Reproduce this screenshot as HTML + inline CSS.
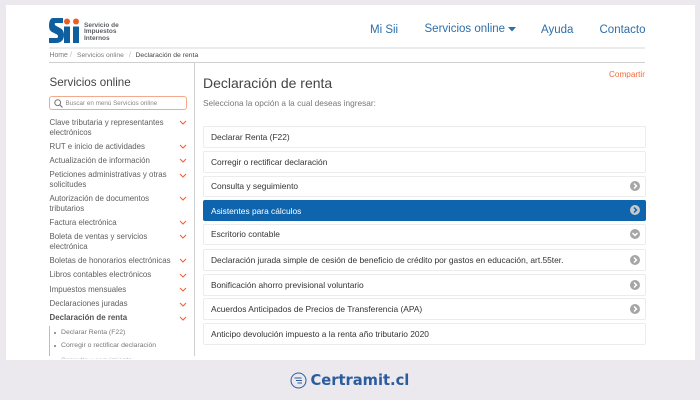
<!DOCTYPE html>
<html lang="es"><head><meta charset="utf-8"><title>Declaración de renta</title>
<style>
html,body{margin:0;padding:0}
body{width:700px;height:400px;background:#ebe8ee;position:relative;overflow:hidden;font-family:"Liberation Sans",sans-serif}
.a{position:absolute;white-space:nowrap}
#p{position:absolute;left:6px;top:5px;width:689px;height:355px;background:#fff}
.n{font-size:11.5px;color:#2d6fa8;top:23px;line-height:14px}
.m{left:49.5px;font-size:7.9px;line-height:9.5px;color:#5f5f5f;white-space:nowrap}
.ch{position:absolute;left:179px;width:8px;height:5px}
.r{position:absolute;left:203px;width:441px;background:#fff;border:1px solid #ececec;border-radius:2px;font-size:8.4px;color:#333;box-sizing:content-box}
.r span{position:absolute;left:7px;top:50%;transform:translateY(-50%);white-space:nowrap}
.r svg{position:absolute;right:5px;top:50%;margin-top:-5.5px}
.s{left:61px;font-size:6.85px;color:#777;line-height:10px}
</style></head><body>
<div id="p"></div>
<svg class="a" style="left:49px;top:17px" width="32" height="27" viewBox="0 0 32 27">
<path fill="#0f5f9f" d="M4 1H14V6H6.500C5.500 6 5.500 8 6.500 8.500L11 11C14 12.500 15 15 15 18C15 23 12 26 7 26H0V21H7.500C9.500 21 9.500 18.500 8 17.500L3 15C1 14 0 11.500 0 9C0 4 1.500 1 4 1Z"/>
<rect x="15" y="9.500" width="6" height="16.500" fill="#0f5f9f"/>
<rect x="24" y="9.500" width="6" height="16.500" fill="#0f5f9f"/>
<circle cx="18" cy="4.500" r="3" fill="#ef5b25"/><circle cx="27" cy="4.500" r="3" fill="#ef5b25"/>
</svg>
<div class="a" style="left:84px;top:23px;font-size:6.500px;line-height:6.300px;font-weight:bold;color:#5c5f63">Servicio de<br>Impuestos<br>Internos</div>
<div class="a n" style="left:370px">Mi Sii</div>
<div class="a n" style="left:424.500px;top:22px">Servicios online</div>
<svg class="a" style="left:508px;top:26.500px" width="8" height="5"><path d="M0 0H8L4 4.500Z" fill="#2d6fa8"/></svg>
<div class="a n" style="left:541px">Ayuda</div>
<div class="a n" style="left:599.500px">Contacto</div>
<div class="a" style="left:49px;top:47px;width:596px;height:2px;background:#ececec"></div>
<div class="a" style="left:49px;top:61.500px;width:596px;height:1px;background:#cfcfcf"></div>
<div class="a" style="left:49.500px;top:51px;font-size:6.900px;line-height:10px;color:#7b7b7b">Home</div>
<div class="a" style="left:70px;top:51px;font-size:6.900px;line-height:10px;color:#b5b5b5">/</div>
<div class="a" style="left:77px;top:51px;font-size:6.700px;line-height:10px;color:#7b7b7b">Servicios online</div>
<div class="a" style="left:129px;top:51px;font-size:6.900px;line-height:10px;color:#b5b5b5">/</div>
<div class="a" style="left:135.500px;top:51px;font-size:6.800px;line-height:10px;color:#444">Declaración de renta</div>
<div class="a" style="left:194px;top:62px;width:1px;height:294px;background:#cfcfcf"></div>
<div class="a" style="left:49.500px;top:74.500px;font-size:11.600px;line-height:15px;color:#444">Servicios online</div>
<div class="a" style="left:49px;top:96px;width:136px;height:12px;border:1px solid #f3a98c;border-radius:3px"></div>
<svg class="a" style="left:54px;top:98.500px" width="9" height="9" viewBox="0 0 9 9"><circle cx="3.700" cy="3.700" r="2.900" fill="none" stroke="#777" stroke-width="1"/><path d="M5.800 5.800L8.500 8.500" stroke="#777" stroke-width="1.100"/></svg>
<div class="a" style="left:65.500px;top:98.500px;font-size:6.300px;line-height:10px;color:#888">Buscar en menú Servicios online</div>

<div class="a m" style="top:118px">Clave tributaria y representantes<br>electrónicos</div>
<div class="a m" style="top:141.500px">RUT e inicio de actividades</div>
<div class="a m" style="top:155.500px">Actualización de información</div>
<div class="a m" style="top:170px">Peticiones administrativas y otras<br>solicitudes</div>
<div class="a m" style="top:194px">Autorización de documentos<br>tributarios</div>
<div class="a m" style="top:218px">Factura electrónica</div>
<div class="a m" style="top:232px">Boleta de ventas y servicios<br>electrónica</div>
<div class="a m" style="top:256px">Boletas de honorarios electrónicas</div>
<div class="a m" style="top:270px">Libros contables electrónicos</div>
<div class="a m" style="top:284.500px">Impuestos mensuales</div>
<div class="a m" style="top:299px">Declaraciones juradas</div>
<div class="a m" style="top:313px;font-weight:bold;color:#555">Declaración de renta</div>

<svg class="ch" style="top:120px" viewBox="0 0 8 5"><path d="M1 1L4 4L7 1" fill="none" stroke="#f0603a" stroke-width="1.100"/></svg>
<svg class="ch" style="top:144px" viewBox="0 0 8 5"><path d="M1 1L4 4L7 1" fill="none" stroke="#f0603a" stroke-width="1.100"/></svg>
<svg class="ch" style="top:158px" viewBox="0 0 8 5"><path d="M1 1L4 4L7 1" fill="none" stroke="#f0603a" stroke-width="1.100"/></svg>
<svg class="ch" style="top:173px" viewBox="0 0 8 5"><path d="M1 1L4 4L7 1" fill="none" stroke="#f0603a" stroke-width="1.100"/></svg>
<svg class="ch" style="top:196px" viewBox="0 0 8 5"><path d="M1 1L4 4L7 1" fill="none" stroke="#f0603a" stroke-width="1.100"/></svg>
<svg class="ch" style="top:220px" viewBox="0 0 8 5"><path d="M1 1L4 4L7 1" fill="none" stroke="#f0603a" stroke-width="1.100"/></svg>
<svg class="ch" style="top:234px" viewBox="0 0 8 5"><path d="M1 1L4 4L7 1" fill="none" stroke="#f0603a" stroke-width="1.100"/></svg>
<svg class="ch" style="top:258px" viewBox="0 0 8 5"><path d="M1 1L4 4L7 1" fill="none" stroke="#f0603a" stroke-width="1.100"/></svg>
<svg class="ch" style="top:273px" viewBox="0 0 8 5"><path d="M1 1L4 4L7 1" fill="none" stroke="#f0603a" stroke-width="1.100"/></svg>
<svg class="ch" style="top:287px" viewBox="0 0 8 5"><path d="M1 1L4 4L7 1" fill="none" stroke="#f0603a" stroke-width="1.100"/></svg>
<svg class="ch" style="top:301.500px" viewBox="0 0 8 5"><path d="M1 1L4 4L7 1" fill="none" stroke="#f0603a" stroke-width="1.100"/></svg>
<svg class="ch" style="top:316px" viewBox="0 0 8 5"><path d="M1 1L4 4L7 1" fill="none" stroke="#f0603a" stroke-width="1.100"/></svg>

<div class="a" style="left:49px;top:326px;width:1px;height:30px;background:#f3a98c"></div>
<div class="a" style="left:54px;top:332px;width:2px;height:2px;background:#999"></div>
<div class="a s" style="top:328px">Declarar Renta (F22)</div>
<div class="a" style="left:54px;top:345px;width:2px;height:2px;background:#999"></div>
<div class="a s" style="top:341px">Corregir o rectificar declaración</div>
<div class="a" style="left:61px;top:350px;width:90px;height:9px;overflow:hidden;opacity:.6"><div class="a" style="left:0;top:5.500px;font-size:6.850px;color:#777;line-height:10px">Consulta y seguimiento</div></div>

<div class="a" style="left:203px;top:74.500px;font-size:14px;line-height:16px;color:#444">Declaración de renta</div>
<div class="a" style="left:203px;top:98px;font-size:8.300px;line-height:10px;color:#777">Selecciona la opción a la cual deseas ingresar:</div>
<div class="a" style="left:609px;top:70px;font-size:8.200px;line-height:10px;color:#f26a3d">Compartir</div>

<div class="r" style="top:126px;height:20px"><span>Declarar Renta (F22)</span></div>
<div class="r" style="top:151px;height:20px"><span>Corregir o rectificar declaración</span></div>
<div class="r" style="top:175.500px;height:19.500px"><span>Consulta y seguimiento</span><svg width="10" height="10" viewBox="0 0 10 10"><circle cx="5" cy="5" r="5" fill="#a6a6a6"/><path d="M4 2.500L6.500 5L4 7.500" fill="none" stroke="#fff" stroke-width="1.500"/></svg></div>
<div class="r" style="top:200px;height:19px;background:#0f64ae;border-color:#0f64ae;color:#fff"><span>Asistentes para cálculos</span><svg width="10" height="10" viewBox="0 0 10 10"><circle cx="5" cy="5" r="5" fill="#c9c9c9"/><path d="M4 2.500L6.500 5L4 7.500" fill="none" stroke="#0f64ae" stroke-width="1.500"/></svg></div>
<div class="r" style="top:223.500px;height:19px"><span>Escritorio contable</span><svg width="10" height="10" viewBox="0 0 10 10"><circle cx="5" cy="5" r="5" fill="#a6a6a6"/><path d="M2.500 4L5 6.500L7.500 4" fill="none" stroke="#fff" stroke-width="1.500"/></svg></div>
<div class="r" style="top:249px;height:20px"><span>Declaración jurada simple de cesión de beneficio de crédito por gastos en educación, art.55ter.</span><svg width="10" height="10" viewBox="0 0 10 10"><circle cx="5" cy="5" r="5" fill="#a6a6a6"/><path d="M4 2.500L6.500 5L4 7.500" fill="none" stroke="#fff" stroke-width="1.500"/></svg></div>
<div class="r" style="top:274px;height:20px"><span>Bonificación ahorro previsional voluntario</span><svg width="10" height="10" viewBox="0 0 10 10"><circle cx="5" cy="5" r="5" fill="#a6a6a6"/><path d="M4 2.500L6.500 5L4 7.500" fill="none" stroke="#fff" stroke-width="1.500"/></svg></div>
<div class="r" style="top:298px;height:20px"><span>Acuerdos Anticipados de Precios de Transferencia (APA)</span><svg width="10" height="10" viewBox="0 0 10 10"><circle cx="5" cy="5" r="5" fill="#a6a6a6"/><path d="M4 2.500L6.500 5L4 7.500" fill="none" stroke="#fff" stroke-width="1.500"/></svg></div>
<div class="r" style="top:323px;height:20px"><span>Anticipo devolución impuesto a la renta año tributario 2020</span></div>

<svg class="a" style="left:289.500px;top:372px" width="17" height="17" viewBox="0 0 17 17"><circle cx="8.500" cy="8.500" r="7.500" fill="none" stroke="#2b5c9e" stroke-width="1"/><path d="M4.500 6H11.500M6 8.500H12M7.500 11H12" stroke="#2b5c9e" stroke-width="1.100"/></svg>
<div class="a" style="left:310.500px;top:371px;font-family:'DejaVu Sans',sans-serif;font-weight:bold;font-size:14.700px;line-height:20px;color:#2b5c9e">Certramit.cl</div>
</body></html>
